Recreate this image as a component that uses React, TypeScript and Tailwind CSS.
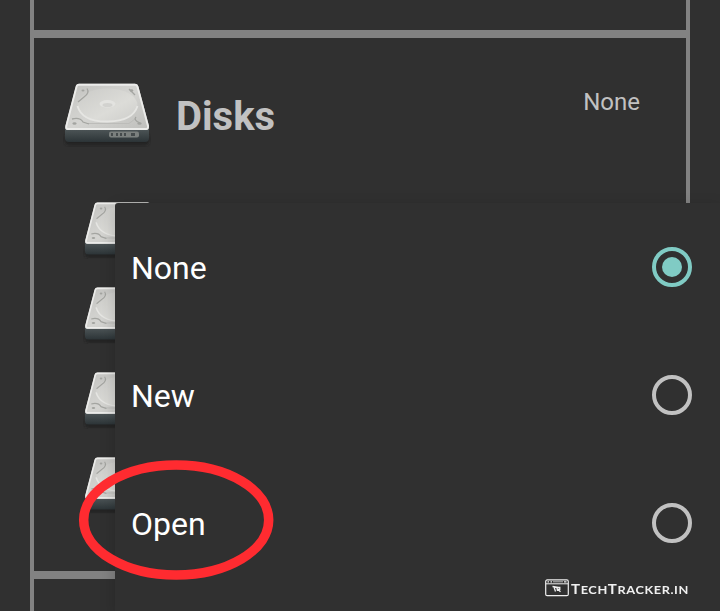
function DiskIcon({ className }: { className: string }) {
  return (
    <svg viewBox="0 0 88 66" className={className}>
      <defs>
        <linearGradient id="face" x1="0" y1="0" x2="1" y2="1">
          <stop offset="0" stopColor="#c2c2bf" />
          <stop offset="0.5" stopColor="#d4d4d1" />
          <stop offset="1" stopColor="#bebebb" />
        </linearGradient>
        <linearGradient id="platter" x1="0" y1="0" x2="1" y2="1">
          <stop offset="0" stopColor="#cbcbc8" />
          <stop offset="0.6" stopColor="#dcdcd8" />
          <stop offset="1" stopColor="#cdcdca" />
        </linearGradient>
        <linearGradient id="front" x1="0" y1="0" x2="0" y2="1">
          <stop offset="0" stopColor="#50585a" />
          <stop offset="1" stopColor="#2c3437" />
        </linearGradient>
        <filter id="soft" x="-10%" y="-50%" width="120%" height="200%">
          <feGaussianBlur stdDeviation="1.5" />
        </filter>
      </defs>
      <rect x="2" y="53" width="84" height="11" rx="4" fill="#1b1e1f" opacity="0.75" filter="url(#soft)" />
      <path d="M2 47H86V57Q86 61 82 61H6Q2 61 2 57Z" fill="url(#front)" />
      <path d="M16 2.700H72Q74.500 2.700 75.200 5L86 45Q86.500 49 83 49H5Q1.500 49 2.500 45L13 5Q13.700 2.700 16 2.700Z" fill="url(#face)" />
      <path d="M16 3.700H72Q74 3.700 74.500 5.700L85 45Q85.200 48 83 48H5Q2.800 48 3.300 45L13.500 5.700Q14 3.700 16 3.700Z" fill="none" stroke="#ececea" strokeWidth="1.900" />
      <ellipse cx="44.500" cy="24" rx="30" ry="16.500" fill="url(#platter)" />
      <path d="M14.500 25Q19 41 45 40.500Q70 40 74.500 25" fill="none" stroke="#e6e6e3" strokeWidth="1.800" />
      <path d="M24 42.500H66L72 38" fill="none" stroke="#bcbcb9" strokeWidth="1" />
      <path d="M24 7.500Q27 12 21 16L15 21M9 38Q17 36 20 41L26 43M73 36Q70 39 77 42M66 8L72 14" fill="none" stroke="#a4a5a1" strokeWidth="1.300" />
      <ellipse cx="44.500" cy="22.800" rx="8" ry="3.700" fill="#e3e3e0" />
      <ellipse cx="44.500" cy="24" rx="5" ry="2" fill="#d2d2cf" />
      <g fill="#a3a4a0">
        <ellipse cx="20" cy="9.500" rx="1.500" ry="1" />
        <ellipse cx="68.500" cy="9.500" rx="1.800" ry="1.200" />
        <ellipse cx="11.500" cy="42.500" rx="2" ry="1.200" />
        <ellipse cx="76.500" cy="42.500" rx="2.200" ry="1.300" />
      </g>
      <rect x="46" y="50.500" width="30" height="6" rx="2" fill="#7b807e" />
      <g fill="#454b4c">
        <rect x="48" y="52" width="2" height="3" />
        <rect x="53" y="52" width="2" height="3" />
        <rect x="57" y="52" width="2" height="3" />
        <rect x="61" y="52" width="2" height="3" />
        <rect x="68" y="52" width="4" height="3" />
      </g>
    </svg>
  );
}

function Option({ label, selected = false }: { label: string; selected?: boolean }) {
  return (
    <div className="flex h-32 items-center justify-between pr-7 pl-4">
      <span className="pt-[2px] text-[32px] leading-10 text-white">{label}</span>
      <span
        className={
          selected
            ? "flex size-10 items-center justify-center rounded-full border-4 border-[#80cbc4]"
            : "size-10 rounded-full border-4 border-[#c1c1c1]"
        }
      >
        {selected && <span className="size-5 rounded-full bg-[#80cbc4]" />}
      </span>
    </div>
  );
}

function BrowserMark() {
  return (
    <svg viewBox="0 0 24 18" className="h-[18px] w-6" fill="none">
      <rect x="0.700" y="0.900" width="22.600" height="15.800" rx="1.500" stroke="#eeeeee" strokeWidth="1.200" />
      <path d="M1 4.800H23" stroke="#eeeeee" strokeWidth="1" />
      <path d="M2.500 2.800H4M5.500 2.800H7M19 2.800H21.500" stroke="#eeeeee" strokeWidth="1.200" />
      <path d="M8 2.800H18" stroke="#bbbbbb" strokeWidth="1" />
      <path d="M7.500 7.500L13.500 8.300M9 8L10.500 12.500M12 8.500L12.500 12M12.500 8.500H14.800V10.300H12.800L15.500 12.800" stroke="#eeeeee" strokeWidth="1.300" />
    </svg>
  );
}

export default function App() {
  return (
    <div className="relative h-[611px] w-[720px] overflow-hidden bg-[#303030] font-[Roboto,sans-serif]">
      <main className="ml-[30px] flex h-full w-[660px] flex-col border-x-4 border-[#828282]">
        <div className="h-[30px] shrink-0" />
        <section className="h-[549px] shrink-0 border-y-8 border-[#828282]">
          <header className="flex h-[162px] items-start pl-[29px]">
            <DiskIcon className="mt-[43px] h-[66px] w-[88px]" />
            <h1 className="mt-[55px] ml-[25px] text-[40px] leading-[48px] font-bold text-[#c1c1c1]">Disks</h1>
            <span className="mt-[48px] mr-[46px] ml-auto text-2xl text-[#c1c1c1]">None</span>
          </header>
          <div className="flex flex-col gap-[26px] pl-[49px]">
            <DiskIcon className="h-[59px] w-[79px]" />
            <DiskIcon className="h-[59px] w-[79px]" />
            <DiskIcon className="h-[59px] w-[79px]" />
            <DiskIcon className="h-[59px] w-[79px]" />
          </div>
        </section>
      </main>

      <div className="absolute top-[203px] left-[115px] h-[408px] w-[605px] rounded-tl-[3px] bg-[#303030] shadow-[0_5px_16px_rgba(0,0,0,0.2)]">
        <Option label="None" selected />
        <Option label="New" />
        <Option label="Open" />
      </div>

      <svg className="pointer-events-none absolute top-[455px] left-[74px] h-[130px] w-[204px]" viewBox="0 0 204 130">
        <ellipse cx="102.200" cy="65" rx="92.500" ry="55" fill="none" stroke="#ff2b30" strokeWidth="9.500" />
      </svg>

      <div className="absolute top-[579px] left-[545px] flex items-start text-[#f0f0f0]">
        <BrowserMark />
        <span className="mt-px ml-[1.500px] origin-left scale-x-[1.160] font-[Lato,sans-serif] text-[11px] leading-[18px] font-bold tracking-[0.5px] whitespace-nowrap uppercase">
          <span className="text-[13px]">T</span>ech<span className="text-[13px]">T</span>racker.in
        </span>
      </div>
    </div>
  );
}
